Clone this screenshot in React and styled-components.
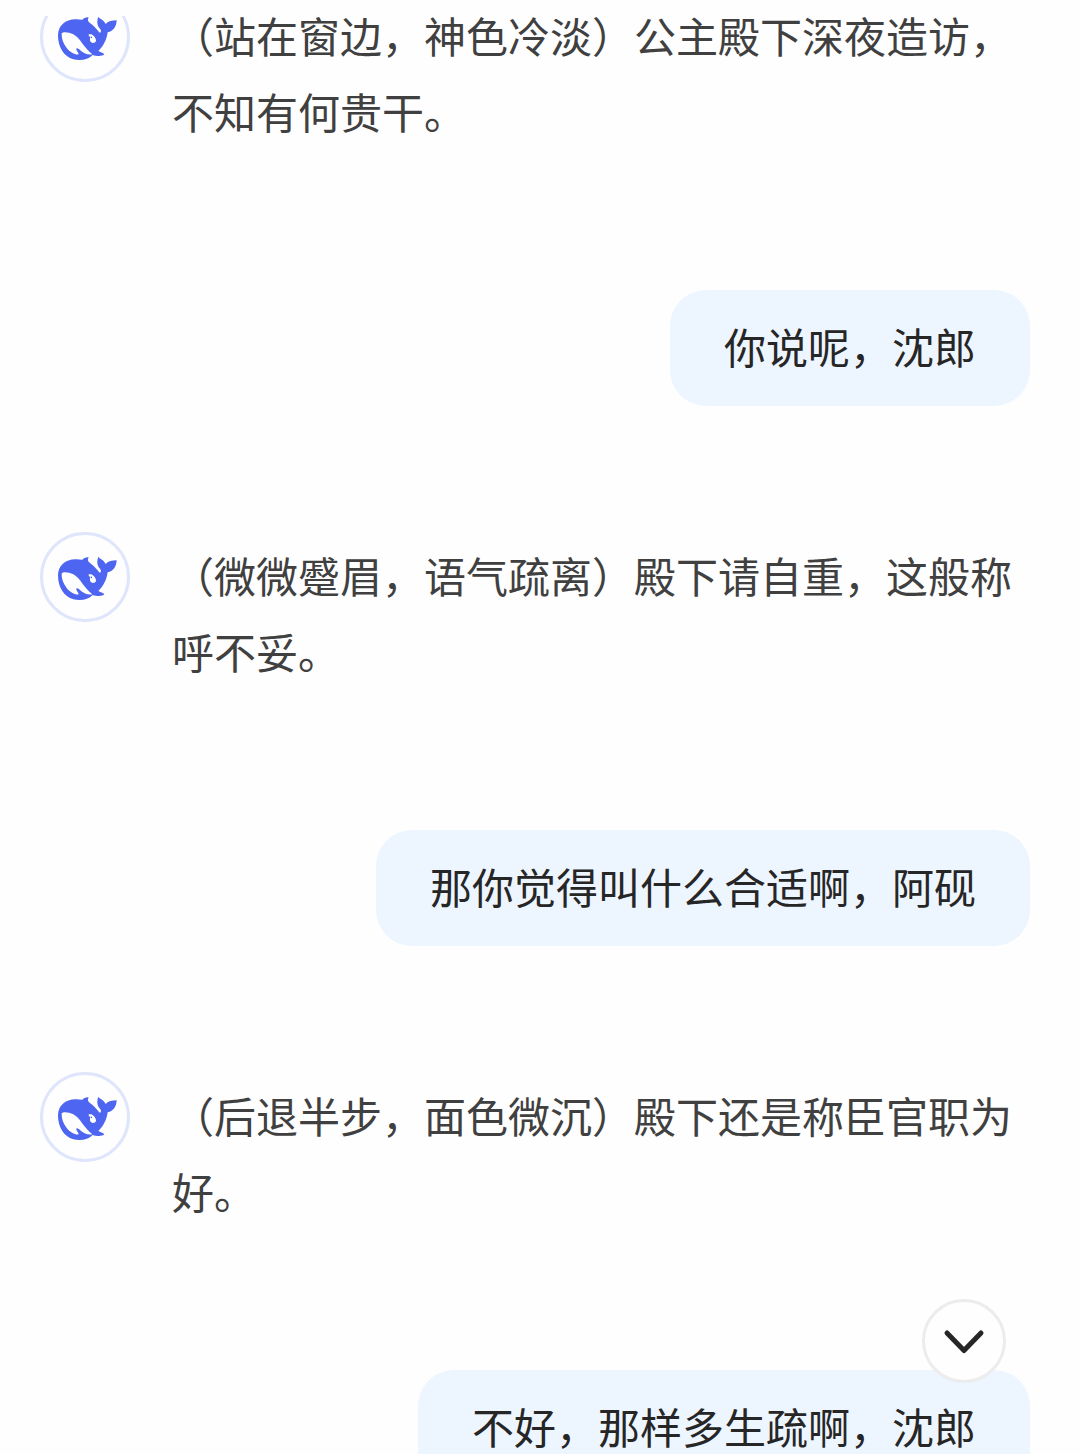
import React from "react";
import styled, { createGlobalStyle } from "styled-components";

const GlobalStyle = createGlobalStyle`
  * {
    box-sizing: border-box;
  }

  body {
    margin: 0;
    background-color: #fefefe;
    font-family: "Noto Sans CJK SC", sans-serif;
    font-size: 42px;
  }
`;

const Page = styled.div`
  height: 100vh;
  padding-top: 16px;
  overflow: hidden;
`;

const Conversation = styled.main`
  height: 100%;
  overflow: hidden;
`;

const MessageList = styled.div`
  display: flex;
  flex-direction: column;
  gap: 126px;
  margin-top: -24px;
  padding: 0 50px 0 40px;
`;

const Reply = styled.article`
  display: flex;
  align-items: flex-start;
  gap: 42px;
`;

const Avatar = styled.div`
  display: flex;
  flex-shrink: 0;
  align-items: center;
  justify-content: center;
  width: 90px;
  height: 90px;
  padding-left: 4px;
  border: 3px solid #dfe6fb;
  border-radius: 50%;
`;

const ReplyText = styled.p`
  margin: 0;
  padding: 5px 0 15px;
  color: #404040;
  line-height: 76px;
`;

const Bubble = styled.p`
  align-self: flex-end;
  margin: 0;
  padding: 18px 54px 22px;
  border-radius: 36px;
  background-color: #edf5ff;
  color: #262626;
  line-height: 76px;
`;

const ScrollButton = styled.button`
  position: fixed;
  right: 74px;
  bottom: 71px;
  display: flex;
  align-items: center;
  justify-content: center;
  width: 84px;
  height: 84px;
  padding: 0;
  border: 3px solid #ececec;
  border-radius: 50%;
  background-color: #fefefe;
  cursor: pointer;
`;

const messages = [
  { id: 1, role: "assistant", text: "（站在窗边，神色冷淡）公主殿下深夜造访，不知有何贵干。" },
  { id: 2, role: "user", text: "你说呢，沈郎" },
  { id: 3, role: "assistant", text: "（微微蹙眉，语气疏离）殿下请自重，这般称呼不妥。" },
  { id: 4, role: "user", text: "那你觉得叫什么合适啊，阿砚" },
  { id: 5, role: "assistant", text: "（后退半步，面色微沉）殿下还是称臣官职为好。" },
  { id: 6, role: "user", text: "不好，那样多生疏啊，沈郎" },
];

const WhaleIcon = () => (
  <svg width="60" height="60" viewBox="81 81 180 180" aria-hidden="true">
    <path
      fill="#4d65f0"
      d="M84 166C84 138 106 118 136 118C145 118 151 120 157 119C161 114 168 111 176 112C172 119 173 124 180 129C192 138 201 148 209 158C214 157 214 150 210 146C201 137 200 124 205 110C210 118 222 119 227 132C235 123 247 121 260 121C259 142 249 154 233 157C230 180 219 200 205 213C211 217 219 217 223 223C218 230 199 229 188 225C175 239 153 243 130 238C102 230 84 203 84 166Z"
    />
    <path
      fill="#fefefe"
      d="M95 160C99 154 117 156 130 163C151 174 162 205 187 223C174 226 162 220 153 213C147 207 141 203 139 206C138 212 147 219 146 223C138 226 121 218 110 204C99 190 94 175 95 160Z"
    />
    <path
      fill="#fefefe"
      d="M175 164C184 159 195 167 198 180C199 186 194 189 188 189C181 188 179 182 180 175C181 170 177 168 175 164Z"
    />
    <circle cx="184" cy="172" r="2.5" fill="#4d65f0" />
  </svg>
);

const ChevronIcon = () => (
  <svg width="44" height="44" viewBox="0 0 44 44" fill="none" aria-hidden="true">
    <path d="M5 14L22 31.5L39 14" stroke="#262626" strokeWidth="5" strokeLinecap="round" strokeLinejoin="round" />
  </svg>
);

const App = () => {
  const handleScrollClick = () => {
    const last = document.getElementById(`message-${messages.length}`);
    last.scrollIntoView({ behavior: "smooth", block: "end" });
  };

  return (
    <Page>
      <GlobalStyle />
      <Conversation>
        <MessageList>
          {messages.map(({ id, role, text }) =>
            role === "user" ? (
              <Bubble key={id} id={`message-${id}`} lang="zh-CN">
                {text}
              </Bubble>
            ) : (
              <Reply key={id} id={`message-${id}`} lang="zh-CN">
                <Avatar>
                  <WhaleIcon />
                </Avatar>
                <ReplyText>{text}</ReplyText>
              </Reply>
            )
          )}
        </MessageList>
      </Conversation>
      <ScrollButton type="button" aria-label="滚动到底部" onClick={handleScrollClick}>
        <ChevronIcon />
      </ScrollButton>
    </Page>
  );
};

export default App;
